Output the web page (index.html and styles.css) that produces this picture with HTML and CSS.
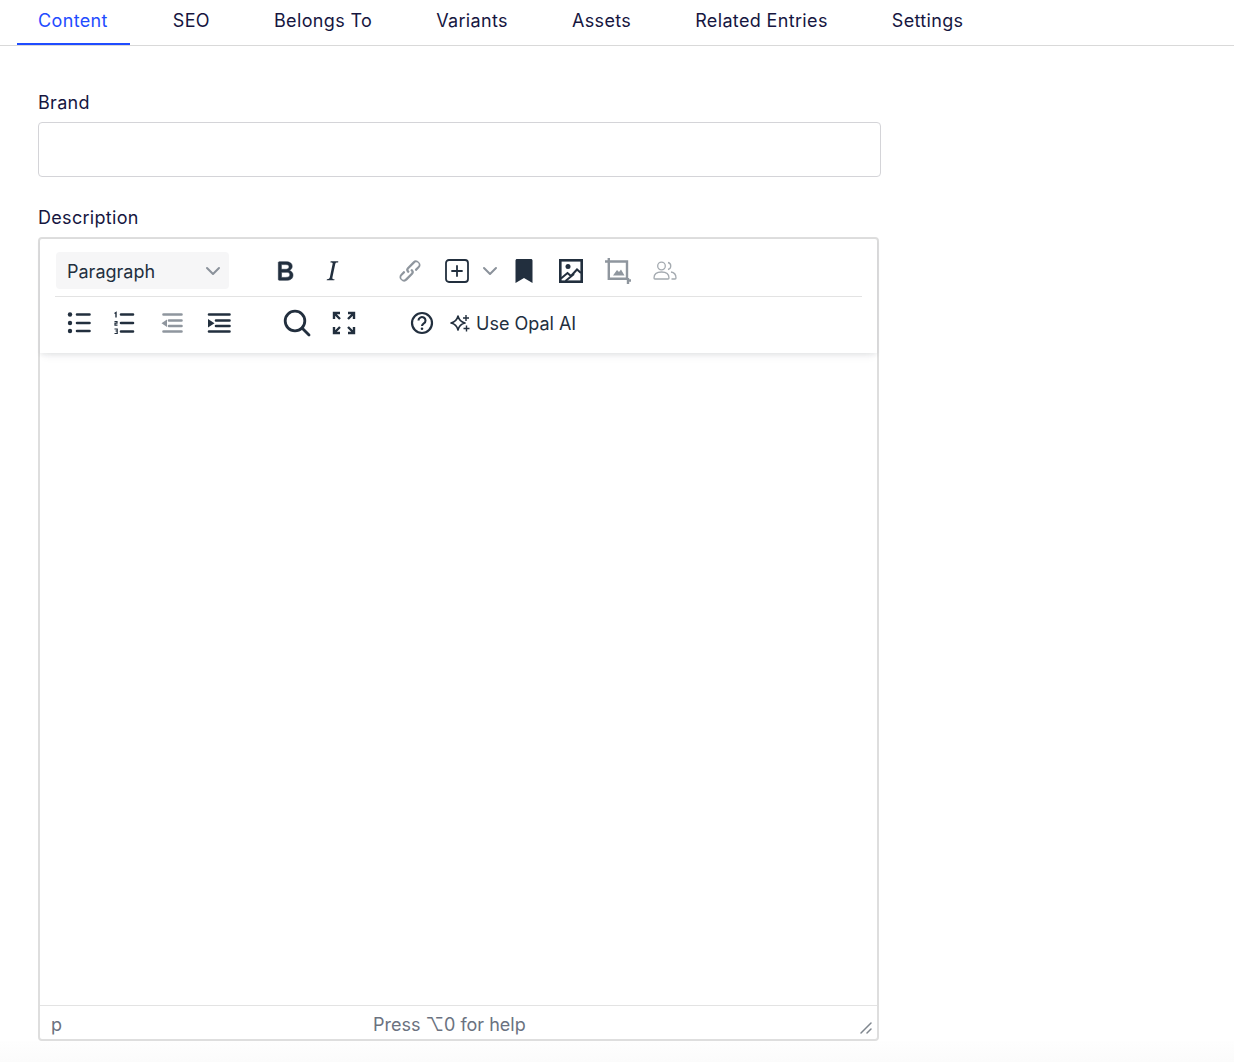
FILE: index.html
```html
<!DOCTYPE html>
<html>

<head>
    <meta charset="UTF-8" />
    <title>Edit Entry</title>
    <link rel="stylesheet" href="styles.css">
</head>

<body>
    <div class="tabs">
        <div class="tab active">Content</div>
        <div class="tab">SEO</div>
        <div class="tab">Belongs To</div>
        <div class="tab">Variants</div>
        <div class="tab">Assets</div>
        <div class="tab">Related Entries</div>
        <div class="tab">Settings</div>
    </div>

    <div class="form">
        <div class="fieldLabel brandLabel">Brand</div>
        <div class="textInput"></div>

        <div class="fieldLabel descLabel">Description</div>
        <div class="editor">
            <div class="toolbar">
                <div class="toolRow firstRow">
                    <div class="formatSelect">
                        <span>Paragraph</span>
                        <svg class="selectArrow" width="16" height="10" viewBox="0 0 16 10"><path d="M2 2l6 6 6-6" fill="none" stroke="#8b929b" stroke-width="2" stroke-linecap="round" stroke-linejoin="round"/></svg>
                    </div>
                    <div class="toolGroup">
                        <div class="toolButton">
                            <svg width="32" height="32" viewBox="0 0 24 24"><path fill="#222f3e" stroke="#222f3e" stroke-width="0.4" d="M7.8 19c-.3 0-.5 0-.6-.2l-.2-.5V5.700c0-.2 0-.4.2-.5l.6-.2h5c1.500 0 2.700.3 3.500 1 .7.6 1.100 1.400 1.100 2.500a3 3 0 0 1-.6 1.900c-.4.6-1 1-1.600 1.200.4.1.9.3 1.300.6s.8.7 1 1.200c.4.4.5 1 .5 1.600 0 1.300-.4 2.300-1.300 3-.8.7-2.100 1-3.800 1H7.800Zm5-8.300c.6 0 1.200-.1 1.600-.5.4-.3.6-.7.6-1.300 0-1.100-.8-1.700-2.300-1.700H9.300v3.500h3.400Zm.5 6c.7 0 1.300-.1 1.700-.4.4-.4.6-.9.6-1.500s-.2-1-.7-1.400c-.4-.3-1-.4-2-.4H9.400v3.800h4Z"/></svg>
                        </div>
                        <div class="toolButton">
                            <svg width="32" height="32" viewBox="0 0 24 24"><path fill="#222f3e" d="M16.700 4.700l-.1.9h-.3c-.6 0-1 0-1.400.3-.3.3-.4.6-.5 1.100l-2.100 9.800v.6c0 .5.4.8 1.400.8h.2l-.2.8H8l.2-.8h.2c1.100 0 1.800-.5 2-1.500l2-9.800.1-.5c0-.6-.4-.8-1.400-.8h-.3l.2-.9h5.800Z"/></svg>
                        </div>
                    </div>
                    <div class="toolGroup">
                        <div class="toolButton">
                            <svg width="28" height="28" viewBox="0 0 24 24"><path fill="#8f969e" d="M6.200 12.300a1 1 0 0 1 1.400 1.400l-2 2a2 2 0 1 0 2.600 2.800l4.800-4.800a1 1 0 0 0 0-1.400 1 1 0 1 1 1.400-1.300 2.900 2.900 0 0 1 0 4L9.600 20a3.900 3.900 0 0 1-5.500-5.500l2-2Zm11.600-.6a1 1 0 0 1-1.400-1.400l2-2a2 2 0 1 0-2.600-2.800L11 10.300a1 1 0 0 0 0 1.400A1 1 0 1 1 9.600 13a2.900 2.900 0 0 1 0-4L14.400 4a3.900 3.900 0 0 1 5.500 5.500l-2 2Z"/></svg>
                        </div>
                        <div class="toolButton">
                            <svg width="24" height="24" viewBox="0 0 24 24"><rect x="1" y="1" width="22" height="22" rx="3" fill="none" stroke="#222f3e" stroke-width="1.800"/><path d="M12 7v10M7 12h10" stroke="#222f3e" stroke-width="1.800" stroke-linecap="round"/></svg>
                        </div>
                        <div class="splitArrow">
                            <svg width="16" height="10" viewBox="0 0 16 10"><path d="M2 2l6 6 6-6" fill="none" stroke="#8b929b" stroke-width="2" stroke-linecap="round" stroke-linejoin="round"/></svg>
                        </div>
                        <div class="toolButton">
                            <svg width="18" height="24" viewBox="0 0 18 24"><path fill="#222f3e" d="M0.500 1.500C0.500 .7 1.200 0 2 0h14c.8 0 1.500.7 1.500 1.500V24L9 19 0.500 24Z"/></svg>
                        </div>
                        <div class="toolButton">
                            <svg width="24" height="24" viewBox="0 0 24 24"><rect x="1.300" y="1.300" width="21.400" height="21.400" fill="none" stroke="#222f3e" stroke-width="2.600"/><circle cx="9" cy="7.500" r="2.500" fill="#222f3e"/><path d="M2 19.500l6.500-5.500 3.500 3 6-6.500 4 3.500M6.500 22l8.500-7" fill="none" stroke="#222f3e" stroke-width="2"/></svg>
                        </div>
                        <div class="toolButton cropButton">
                            <svg width="26" height="26" viewBox="0 0 26 26"><path d="M0 3.500h4.500M3.800 0v4.500M3.800 3.500v17.200h18.200V3.500H3.800M23 20v6M22 22.500h4" fill="none" stroke="#8f969e" stroke-width="2.400"/><path d="M8 17.500l4-5.500 2 2 2-2.500 3.500 6Z" fill="#8f969e"/></svg>
                        </div>
                        <div class="toolButton">
                            <svg width="24" height="20" viewBox="0 0 24 20"><g fill="none" stroke="#a4aab0" stroke-width="1.300"><circle cx="8.500" cy="5" r="3.800"/><path d="M15 1.500a3.600 3.600 0 0 1 0 7"/><path d="M1 17c0-4 3-6 7.500-6s7.500 2 7.500 6c0 .7-.4 1-1 1H2c-.6 0-1-.3-1-1Z"/><path d="M18 11c3 .4 5 2.400 5 6 0 .6-.4 1-1 1h-3.500"/></g></svg>
                        </div>
                    </div>
                </div>
                <div class="toolRow secondRow">
                    <div class="toolGroup firstGroup">
                        <div class="toolButton">
                            <svg width="24" height="24" viewBox="0 0 24 24"><g fill="#222f3e"><circle cx="3" cy="3.500" r="2.200"/><circle cx="3" cy="12" r="2.200"/><circle cx="3" cy="20" r="2.200"/></g><path d="M10 3.500h12.500M10 12h12.500M10 20h12.500" stroke="#222f3e" stroke-width="2.600" stroke-linecap="round"/></svg>
                        </div>
                        <div class="toolButton numButton">
                            <svg width="24" height="24" viewBox="0 0 24 24"><path d="M2.500 2.500l1.500-1V6.500" fill="none" stroke="#222f3e" stroke-width="1.400"/><path d="M2.500 10.500h2.500v1.700H3v2h2.500M2.500 18h2.700v2H3.500h1.700v2.500H2.500" fill="none" stroke="#222f3e" stroke-width="1.200"/><path d="M9 3.500h12M9 12h12M9 20.500h12" stroke="#222f3e" stroke-width="2.600" stroke-linecap="round"/></svg>
                        </div>
                        <div class="toolButton">
                            <svg width="24" height="24" viewBox="0 0 24 24"><path d="M3.500 3.500h18M9 9.500h12.500M9 15h12.500M3.500 20.500h18" stroke="#8f969e" stroke-width="2.600" stroke-linecap="round"/><path d="M7 8.500l-5.500 3.800L7 16Z" fill="#8f969e"/></svg>
                        </div>
                        <div class="toolButton">
                            <svg width="24" height="24" viewBox="0 0 24 24"><path d="M2 3.500h20.500M9 9.500h13.500M9 15h13.500M2 20.500h20.500" stroke="#222f3e" stroke-width="2.600" stroke-linecap="round"/><path d="M1 8l6.500 4.200L1 16.500Z" fill="#222f3e"/></svg>
                        </div>
                    </div>
                    <div class="toolGroup">
                        <div class="toolButton">
                            <svg width="28" height="28" viewBox="0 0 28 28"><circle cx="12" cy="12" r="9.800" fill="none" stroke="#222f3e" stroke-width="2.800"/><path d="M19 19l7 7" stroke="#222f3e" stroke-width="2.800" stroke-linecap="round"/></svg>
                        </div>
                        <div class="toolButton">
                            <svg width="24" height="24" viewBox="0 0 24 24"><g fill="none" stroke="#222f3e" stroke-width="2.400"><path d="M2 8V2h6M2 2l6 6M16 2h6v6M22 2l-6 6M2 16v6h6M2 22l6-6M22 16v6h-6M22 22l-6-6"/></g></svg>
                        </div>
                    </div>
                    <div class="toolGroup">
                        <div class="toolButton">
                            <svg width="24" height="24" viewBox="0 0 24 24"><circle cx="12" cy="12" r="10" fill="none" stroke="#222f3e" stroke-width="2.200"/><path d="M8.500 9.500a3.500 3.400 0 1 1 5.300 2.900c-1.200.8-1.800 1.300-1.800 2.600" fill="none" stroke="#222f3e" stroke-width="2.100"/><circle cx="12" cy="17.800" r="1.300" fill="#222f3e"/></svg>
                        </div>
                        <div class="opalButton">
                            <svg width="20" height="20" viewBox="0 0 20 20"><path d="M8 3c.9 3.800 2.700 6 7 7-4.300 1-6.100 3.200-7 7-.9-3.800-2.700-6-7-7 4.300-1 6.100-3.200 7-7Z" fill="none" stroke="#222f3e" stroke-width="1.600" stroke-linejoin="round"/><path d="M16 2v6M13 5h6M16.500 12.500v6M13.500 15.500h6" stroke="#222f3e" stroke-width="1.400"/></svg>
                            <span>Use Opal AI</span>
                        </div>
                    </div>
                </div>
            </div>
            <div class="editArea"></div>
            <div class="statusBar">
                <span class="statusPath">p</span>
                <span class="statusHelp">Press ⌥0 for help</span>
                <svg class="resizeHandle" width="12" height="12" viewBox="0 0 12 12"><path d="M1 11L11 1M7 11l4-4" stroke="#7f868e" stroke-width="1.500" stroke-linecap="round"/></svg>
            </div>
        </div>
    </div>
    <div class="pageEnd"></div>
</body>

</html>
```

FILE: styles.css
```css
html, body {
    height: 100%;
}

body {
    margin: 0;
    display: flex;
    flex-direction: column;
    background-color: white;
    color: #16163f;
    font-family: Inter, "Noto Sans", sans-serif;
    font-size: 18px;
}

.tabs {
    display: flex;
    gap: 22px;
    height: 45px;
    padding-left: 17px;
    border-bottom: 1px solid #d9d9d9;
}

.tab {
    box-sizing: border-box;
    height: 45px;
    padding: 10px 21px 0;
    line-height: 21px;
    letter-spacing: 0.35px;
}

.tab.active {
    padding-right: 22px;
    color: #1f4cff;
    border-bottom: 2px solid #1f4cff;
}

.form {
    padding-left: 38px;
    width: 843px;
}

.fieldLabel {
    line-height: 22px;
    letter-spacing: 0.3px;
}

.brandLabel {
    margin-top: 46px;
    margin-bottom: 8px;
}

.descLabel {
    margin-top: 30px;
    margin-bottom: 8px;
}

.textInput {
    box-sizing: border-box;
    height: 55px;
    border: 1px solid #d4d4d8;
    border-radius: 4px;
}

.editor {
    box-sizing: border-box;
    width: 841px;
    height: 804px;
    display: flex;
    flex-direction: column;
    border: 2px solid #dedede;
    border-radius: 4px;
}

.toolbar {
    height: 114px;
    padding: 0 15px;
    box-shadow: 0 2px 4px rgba(34, 47, 62, 0.08), 0 8px 8px -4px rgba(34, 47, 62, 0.05);
    color: #222f3e;
}

.toolRow {
    display: flex;
    align-items: center;
}

.firstRow {
    box-sizing: border-box;
    height: 58px;
    padding-top: 6px;
    border-bottom: 1px solid #e3e3e3;
}

.secondRow {
    height: 52px;
}

.formatSelect {
    box-sizing: border-box;
    width: 173px;
    height: 37px;
    margin-left: 1px;
    margin-right: 32px;
    padding: 1px 8px 0 11px;
    display: flex;
    align-items: center;
    justify-content: space-between;
    background-color: #f6f6f7;
    border-radius: 4px;
}

.toolGroup {
    display: flex;
    align-items: center;
    margin-right: 31px;
}

.firstGroup {
    margin-left: 0.5px;
}

.toolButton {
    width: 47px;
    display: flex;
    justify-content: center;
    align-items: center;
}

.cropButton {
    width: 46px;
    padding-left: 1px;
}

.numButton {
    margin-left: -2px;
    margin-right: 1px;
}

.splitArrow {
    width: 20px;
    display: flex;
    justify-content: center;
}

.opalButton {
    display: flex;
    align-items: center;
    gap: 6px;
    margin-left: 4.5px;
}

.editArea {
    flex: 1;
}

.statusBar {
    box-sizing: border-box;
    height: 34px;
    position: relative;
    display: flex;
    align-items: center;
    padding-top: 3px;
    padding-left: 11px;
    border-top: 1px solid #e3e3e3;
    color: #6b7280;
}

.statusHelp {
    margin-left: 311px;
}

.resizeHandle {
    position: absolute;
    right: 5px;
    bottom: 5px;
}

.pageEnd {
    flex: 1;
    background: linear-gradient(#fefefe, #fbfbfb);
}
```
